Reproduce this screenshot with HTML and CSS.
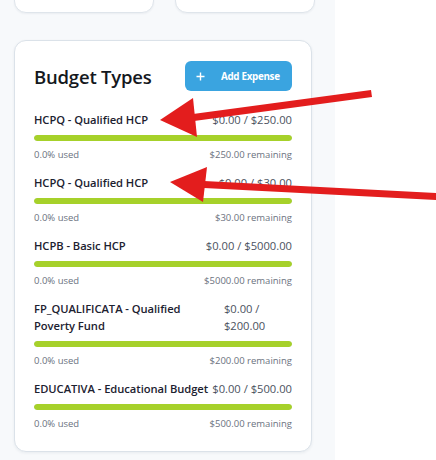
FILE: index.html
```html
<!DOCTYPE html>
<html lang="en">
<head>
<meta charset="utf-8">
<title>Budget Types</title>
<link rel="stylesheet" href="styles.css">
</head>
<body>
<div class="page">
  <main class="panel">
    <div class="top-cards">
      <div class="mini-card"></div>
      <div class="mini-card"></div>
    </div>
    <section class="card">
      <header class="card-head">
        <h2 class="title">Budget Types</h2>
        <button class="btn-add" type="button">
          <svg class="plus" width="9" height="9" viewBox="0 0 9 9"><path d="M4.5 0.5v8M0.5 4.5h8" stroke="#fff" stroke-width="1.4" fill="none"/></svg>
          <span>Add Expense</span>
        </button>
      </header>
      <div class="rows">
        <div class="row">
          <div class="row-top"><span class="name">HCPQ - Qualified HCP</span><span class="amount">$0.00 / $250.00</span></div>
          <div class="bar"><div class="fill" style="width:100%"></div></div>
          <div class="row-foot"><span>0.0% used</span><span>$250.00 remaining</span></div>
        </div>
        <div class="row">
          <div class="row-top"><span class="name">HCPQ - Qualified HCP</span><span class="amount">$0.00 / $30.00</span></div>
          <div class="bar"><div class="fill" style="width:100%"></div></div>
          <div class="row-foot"><span>0.0% used</span><span>$30.00 remaining</span></div>
        </div>
        <div class="row">
          <div class="row-top"><span class="name">HCPB - Basic HCP</span><span class="amount">$0.00 / $5000.00</span></div>
          <div class="bar"><div class="fill" style="width:100%"></div></div>
          <div class="row-foot"><span>0.0% used</span><span>$5000.00 remaining</span></div>
        </div>
        <div class="row">
          <div class="row-top"><span class="name">FP_QUALIFICATA - Qualified Poverty Fund</span><span class="amount">$0.00 / $200.00</span></div>
          <div class="bar"><div class="fill" style="width:100%"></div></div>
          <div class="row-foot"><span>0.0% used</span><span>$200.00 remaining</span></div>
        </div>
        <div class="row">
          <div class="row-top"><span class="name">EDUCATIVA - Educational Budget</span><span class="amount">$0.00 / $500.00</span></div>
          <div class="bar"><div class="fill" style="width:100%"></div></div>
          <div class="row-foot"><span>0.0% used</span><span>$500.00 remaining</span></div>
        </div>
      </div>
    </section>
  </main>
  <svg class="annotations" width="436" height="460" viewBox="0 0 436 460">
    <g fill="#e31d1d" stroke="none">
      <path d="M371 90 L372 97 L194 121 L193 114 Z"/>
      <path d="M160 120 L193 98 L197 137 Z"/>
      <path d="M436 193 L436 200 L204 188 L204 181 Z"/>
      <path d="M170 182 L207 167 L203 202 Z"/>
    </g>
  </svg>
</div>
</body>
</html>
```
FILE: styles.css
```css
* { box-sizing: border-box; }
html, body { margin: 0; padding: 0; background: #ffffff; }
body {
  font-family: "Open Sans", "Noto Sans", sans-serif;
  color: #1f2330;
  overflow: hidden;
}
.page {
  position: relative;
  width: 436px;
  height: 460px;
  overflow: hidden;
}
.panel {
  display: flow-root;
  width: 335px;
  height: 460px;
  background: #f7f9fb;
  padding-left: 14px;
}
.top-cards {
  display: grid;
  grid-template-columns: 140px 140px;
  column-gap: 21px;
  margin-top: -40px;
}
.mini-card {
  height: 53px;
  background: #ffffff;
  border: 1px solid #dfe5eb;
  border-radius: 12px;
  box-shadow: 0 1px 2px rgba(30, 50, 80, 0.06);
}
.card {
  width: 298px;
  margin-top: 27px;
  background: #ffffff;
  border: 1px solid #dbe2e9;
  border-radius: 12px;
  box-shadow: 0 1px 3px rgba(30, 50, 80, 0.07);
  padding: 20px 19px 20px 19px;
}
.card-head {
  display: flex;
  align-items: center;
  justify-content: space-between;
  height: 30px;
}
.title {
  margin: 0;
  font-size: 18.5px;
  font-weight: 600;
  color: #141820;
  letter-spacing: -0.2px;
}
.btn-add {
  display: flex;
  align-items: center;
  gap: 16px;
  height: 30px;
  width: 107px;
  padding: 0 0 0 11px;
  border: none;
  border-radius: 6px;
  background: #3aa4e0;
  color: #ffffff;
  font-family: inherit;
  font-size: 9.8px;
  font-weight: 700;
  letter-spacing: -0.3px;
}
.plus { display: block; }
.rows {
  display: flex;
  flex-direction: column;
  gap: 12px;
  margin-top: 20px;
}
.row-top {
  display: flex;
  justify-content: space-between;
  gap: 2px;
  font-size: 11.2px;
  line-height: 17px;
}
.name {
  font-weight: 600;
  color: #1c2130;
  letter-spacing: -0.05px;
}
.amount {
  color: #4b5260;
}
.bar {
  margin-top: 7px;
  height: 6px;
  border-radius: 3px;
  background: #e5e7eb;
  overflow: hidden;
}
.fill {
  height: 100%;
  background: #a6d12a;
  border-radius: 3px;
}
.row-foot {
  display: flex;
  justify-content: space-between;
  margin-top: 6px;
  font-size: 9.5px;
  line-height: 15px;
  color: #6b7280;
}
.annotations {
  position: absolute;
  left: 0;
  top: 0;
  pointer-events: none;
}
```
